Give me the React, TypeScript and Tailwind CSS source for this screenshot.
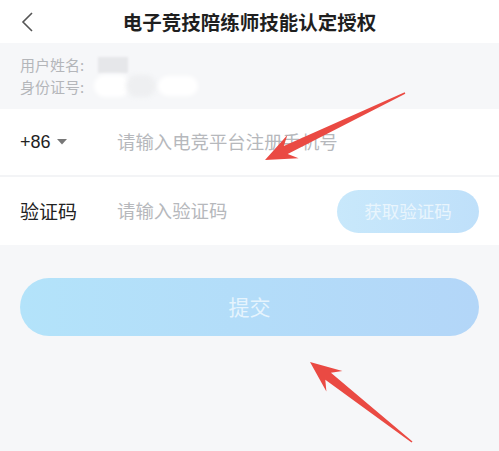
const font = { fontFamily: '"Noto Sans CJK SC", "Noto Sans", sans-serif' };

type Pt = [number, number];

// swept arrow polygon from tip to tail
function arrowPoints(tip: Pt, tail: Pt, headLen = 31, headHalf = 13) {
  const dx = tail[0] - tip[0];
  const dy = tail[1] - tip[1];
  const len = Math.hypot(dx, dy);
  const u: Pt = [dx / len, dy / len];
  const n: Pt = [-u[1], u[0]];
  const at = (a: number, b: number): Pt => [
    tip[0] + u[0] * a + n[0] * b,
    tip[1] + u[1] * a + n[1] * b,
  ];
  const pts: Pt[] = [
    tip,
    at(headLen, headHalf),
    at(headLen - 8, 4.5),
    at(len, 0.8),
    at(len, -0.8),
    at(headLen - 8, -4.5),
    at(headLen, -headHalf),
  ];
  return pts.map((p) => `${p[0].toFixed(1)},${p[1].toFixed(1)}`).join(' ');
}

export default function App() {
  return (
    <div
      className="relative h-[451px] w-[499px] overflow-hidden bg-[#f6f7f9]"
      style={font}
    >
      <header className="flex h-[43px] items-center bg-white px-5">
        <svg width="14" height="22" viewBox="0 0 14 22" className="shrink-0">
          <path d="M12 2 L3 11 L12 20" fill="none" stroke="#555" strokeWidth="1.6" />
        </svg>
        <h1 className="flex-1 text-center text-[19.5px] font-bold leading-none text-[#1f1f1f]">
          电子竞技陪练师技能认定授权
        </h1>
        <div className="w-[14px] shrink-0" />
      </header>

      <section className="h-[66px] px-5 pt-[11px] text-[15px] leading-[21px] text-[#b4b6ba]">
        <div className="flex items-center">
          <span>用户姓名:</span>
          <span className="ml-[14px] h-[16px] w-[30px] bg-[#e6e7ea] blur-[1px]" />
        </div>
        <div className="flex items-center">
          <span>身份证号:</span>
          <span className="ml-[10px] h-[22px] w-[36px] rounded-full bg-white blur-[2px]" />
          <span className="-ml-[4px] h-[22px] w-[30px] rounded-full bg-[#eeeff1] blur-[2px]" />
          <span className="ml-[2px] h-[20px] w-[40px] rounded-full bg-white blur-[2px]" />
        </div>
      </section>

      <div className="flex h-[66px] items-center bg-white px-5">
        <div className="flex w-[97px] items-center text-[18px] text-[#222]" style={{ fontFamily: '"Liberation Sans", "Noto Sans CJK SC", sans-serif' }}>
          <span>+86</span>
          <svg width="10" height="6" viewBox="0 0 10 6" className="ml-[6px]">
            <path d="M0 0 H10 L5 5.5 Z" fill="#777" />
          </svg>
        </div>
        <span className="text-[18.4px] text-[#b6b8bc]">请输入电竞平台注册手机号</span>
      </div>

      <div className="h-[2px] bg-[#f3f4f6]" />

      <div className="flex h-[68px] items-center bg-white pl-5 pr-5">
        <span className="w-[97px] text-[19px] text-[#222]">验证码</span>
        <span className="flex-1 text-[18.4px] text-[#b6b8bc]">请输入验证码</span>
        <button className="flex h-[43px] w-[142px] items-center justify-center rounded-full bg-gradient-to-r from-[#c8e8fb] to-[#bfe0fa] text-[17.5px] text-[#e9f5fd]">
          获取验证码
        </button>
      </div>

      <div className="px-5 pt-[33px]">
        <button className="flex h-[58px] w-full items-center justify-center rounded-full bg-gradient-to-r from-[#b3e3fa] to-[#b3d6f8] text-[21px] text-[#e6f4fd]">
          提交
        </button>
      </div>

      <svg className="pointer-events-none absolute inset-0" width="499" height="451">
        <polygon points={arrowPoints([265, 160], [405, 93])} fill="#ea4a43" />
        <polygon points={arrowPoints([310, 362], [412, 442])} fill="#ea4a43" />
      </svg>
    </div>
  );
}
